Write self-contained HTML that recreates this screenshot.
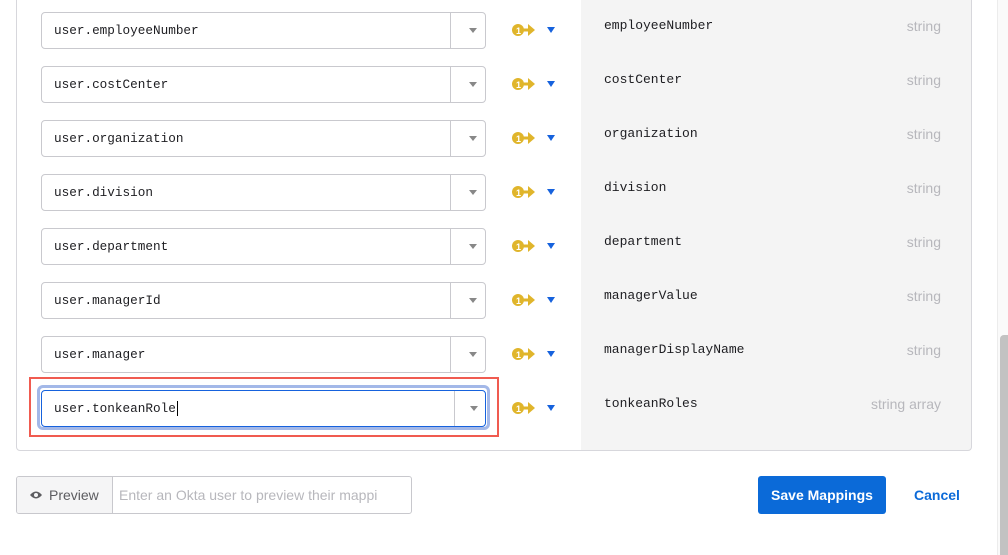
<!DOCTYPE html>
<html><head><style>
body{margin:0;width:1008px;height:555px;background:#fff;position:relative;overflow:hidden;font-family:"Liberation Sans",sans-serif}
.panel{position:absolute;left:16px;top:-10px;width:956px;height:461px;border:1px solid #d7d7dc;border-radius:0 0 4px 4px;box-sizing:border-box}
.grey{position:absolute;left:581px;top:-10px;width:390px;height:460px;background:#f4f4f4}
.row{position:absolute;left:0;width:1000px;height:37px}
.inp{position:absolute;left:41px;top:0;width:445px;height:37px;border:1px solid #c9c9ce;border-radius:4px;box-sizing:border-box;background:#fff}
.inp .t{position:absolute;left:12px;top:10px;font-family:"Liberation Mono",monospace;font-size:12.7px;color:#1d1d21}
.inp .dd{position:absolute;left:408px;top:0;width:1px;height:35px;background:#c9c9ce}
.inp .ar{position:absolute;left:427px;top:15px;width:0;height:0;border-left:4px solid transparent;border-right:4px solid transparent;border-top:5px solid #888}
.ic{position:absolute;left:511px;top:11px}
.bl{position:absolute;left:547px;top:15px;width:0;height:0;border-left:4px solid transparent;border-right:4px solid transparent;border-top:6px solid #1662dd}
.nm{position:absolute;left:604px;top:6px;font-family:"Liberation Mono",monospace;font-size:13px;color:#1d1d21}
.ty{position:absolute;right:59px;top:6px;font-size:14px;color:#b7b7bc}
</style></head><body>
<div class="grey"></div>
<div class="panel"></div>
<div style="position:absolute;left:29px;top:377px;width:470px;height:60px;border:2px solid #f05b50;box-sizing:border-box"></div>
<div style="position:absolute;left:37px;top:385px;width:453px;height:45px;border:3px solid #a3b8e8;border-radius:6px;box-sizing:border-box"></div>

<div class="row" style="top:12px"><div class="inp"><span class="t">user.employeeNumber</span><div class="dd"></div><div class="ar"></div></div><svg class="ic" width="25" height="14"><circle cx="7" cy="7" r="6" fill="#e0b52b"/><text x="5" y="11" font-size="9" fill="#fff" font-family="Liberation Sans" font-weight="bold">1</text><rect x="12" y="5.5" width="6" height="3" fill="#e0b52b"/><path d="M17 1 L24 7 L17 13Z" fill="#e0b52b"/></svg><div class="bl"></div><span class="nm">employeeNumber</span><span class="ty">string</span></div>
<div class="row" style="top:66px"><div class="inp"><span class="t">user.costCenter</span><div class="dd"></div><div class="ar"></div></div><svg class="ic" width="25" height="14"><circle cx="7" cy="7" r="6" fill="#e0b52b"/><text x="5" y="11" font-size="9" fill="#fff" font-family="Liberation Sans" font-weight="bold">1</text><rect x="12" y="5.5" width="6" height="3" fill="#e0b52b"/><path d="M17 1 L24 7 L17 13Z" fill="#e0b52b"/></svg><div class="bl"></div><span class="nm">costCenter</span><span class="ty">string</span></div>
<div class="row" style="top:120px"><div class="inp"><span class="t">user.organization</span><div class="dd"></div><div class="ar"></div></div><svg class="ic" width="25" height="14"><circle cx="7" cy="7" r="6" fill="#e0b52b"/><text x="5" y="11" font-size="9" fill="#fff" font-family="Liberation Sans" font-weight="bold">1</text><rect x="12" y="5.5" width="6" height="3" fill="#e0b52b"/><path d="M17 1 L24 7 L17 13Z" fill="#e0b52b"/></svg><div class="bl"></div><span class="nm">organization</span><span class="ty">string</span></div>
<div class="row" style="top:174px"><div class="inp"><span class="t">user.division</span><div class="dd"></div><div class="ar"></div></div><svg class="ic" width="25" height="14"><circle cx="7" cy="7" r="6" fill="#e0b52b"/><text x="5" y="11" font-size="9" fill="#fff" font-family="Liberation Sans" font-weight="bold">1</text><rect x="12" y="5.5" width="6" height="3" fill="#e0b52b"/><path d="M17 1 L24 7 L17 13Z" fill="#e0b52b"/></svg><div class="bl"></div><span class="nm">division</span><span class="ty">string</span></div>
<div class="row" style="top:228px"><div class="inp"><span class="t">user.department</span><div class="dd"></div><div class="ar"></div></div><svg class="ic" width="25" height="14"><circle cx="7" cy="7" r="6" fill="#e0b52b"/><text x="5" y="11" font-size="9" fill="#fff" font-family="Liberation Sans" font-weight="bold">1</text><rect x="12" y="5.5" width="6" height="3" fill="#e0b52b"/><path d="M17 1 L24 7 L17 13Z" fill="#e0b52b"/></svg><div class="bl"></div><span class="nm">department</span><span class="ty">string</span></div>
<div class="row" style="top:282px"><div class="inp"><span class="t">user.managerId</span><div class="dd"></div><div class="ar"></div></div><svg class="ic" width="25" height="14"><circle cx="7" cy="7" r="6" fill="#e0b52b"/><text x="5" y="11" font-size="9" fill="#fff" font-family="Liberation Sans" font-weight="bold">1</text><rect x="12" y="5.5" width="6" height="3" fill="#e0b52b"/><path d="M17 1 L24 7 L17 13Z" fill="#e0b52b"/></svg><div class="bl"></div><span class="nm">managerValue</span><span class="ty">string</span></div>
<div class="row" style="top:336px"><div class="inp"><span class="t">user.manager</span><div class="dd"></div><div class="ar"></div></div><svg class="ic" width="25" height="14"><circle cx="7" cy="7" r="6" fill="#e0b52b"/><text x="5" y="11" font-size="9" fill="#fff" font-family="Liberation Sans" font-weight="bold">1</text><rect x="12" y="5.5" width="6" height="3" fill="#e0b52b"/><path d="M17 1 L24 7 L17 13Z" fill="#e0b52b"/></svg><div class="bl"></div><span class="nm">managerDisplayName</span><span class="ty">string</span></div>
<div class="row" style="top:390px"><div class="inp" style="border-color:#1662dd"><span class="t">user.tonkeanRole<span style="border-left:1px solid #000;margin-left:1px"></span></span><div class="dd" style="left:412px"></div><div class="ar" style="left:428px"></div></div><svg class="ic" width="25" height="14"><circle cx="7" cy="7" r="6" fill="#e0b52b"/><text x="5" y="11" font-size="9" fill="#fff" font-family="Liberation Sans" font-weight="bold">1</text><rect x="12" y="5.5" width="6" height="3" fill="#e0b52b"/><path d="M17 1 L24 7 L17 13Z" fill="#e0b52b"/></svg><div class="bl"></div><span class="nm">tonkeanRoles</span><span class="ty">string array</span></div>

<div style="position:absolute;left:16px;top:476px;width:396px;height:38px;border:1px solid #c8c8cd;border-radius:3px;box-sizing:border-box;overflow:hidden">
<div style="position:absolute;left:0;top:0;width:95px;height:36px;background:#f5f5f6;border-right:1px solid #c8c8cd"></div>
<svg style="position:absolute;left:12px;top:13px" width="14" height="10"><path d="M1 5 Q7 -2 13 5 Q7 12 1 5Z" fill="#5c5c60"/><circle cx="7" cy="5" r="2" fill="#f5f5f6"/></svg>
<span style="position:absolute;left:32px;top:10px;font-size:14px;color:#5c5c60">Preview</span>
<span style="position:absolute;left:102px;top:10px;font-size:14px;color:#b7b7bc;white-space:nowrap">Enter an Okta user to preview their mappi</span>
</div>
<div style="position:absolute;left:758px;top:476px;width:128px;height:38px;background:#0b6ad8;border-radius:3px;color:#fff;font-weight:bold;font-size:14px;line-height:38px;text-align:center">Save Mappings</div>
<span style="position:absolute;left:914px;top:487px;font-size:14px;font-weight:bold;color:#0b6ad8">Cancel</span>
<div style="position:absolute;left:997px;top:0;width:11px;height:555px;background:#fafafa;border-left:1px solid #ececec"></div>
<div style="position:absolute;left:1000px;top:335px;width:8px;height:220px;background:#c2c2c2;border-radius:4px 0 0 0"></div>
</body></html>
